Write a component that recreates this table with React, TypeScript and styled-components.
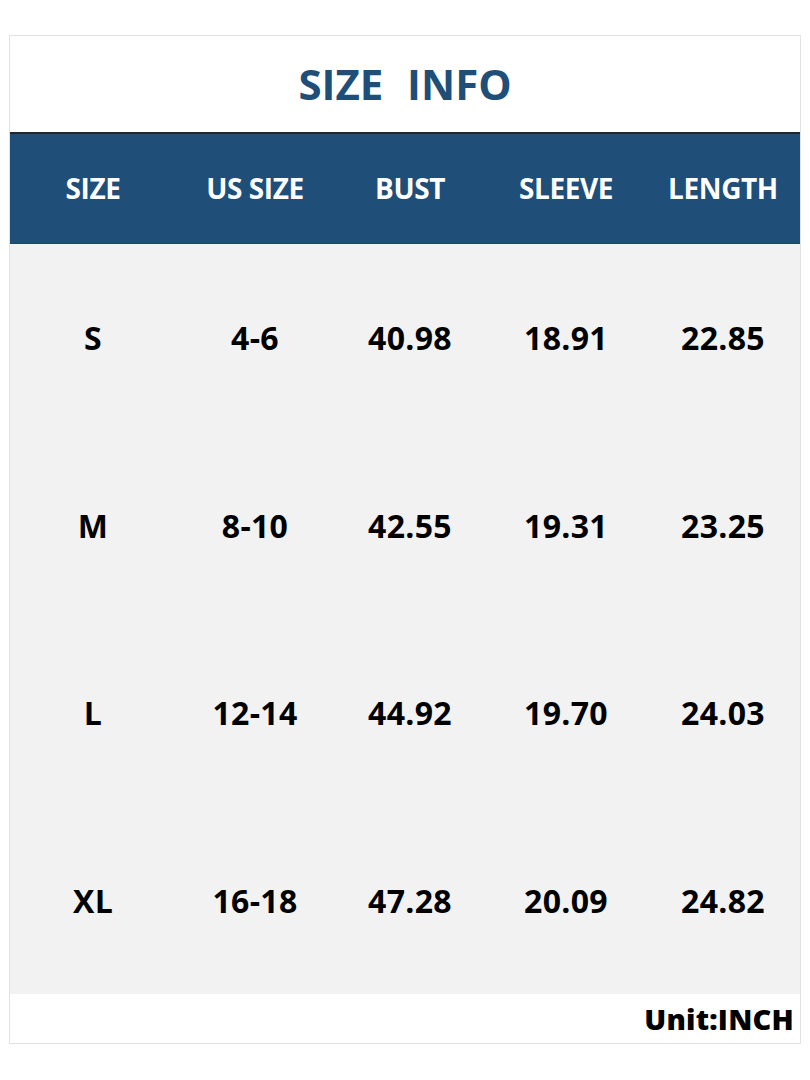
import React from "react";
import styled, { createGlobalStyle } from "styled-components";

const Global = createGlobalStyle`
  html, body { margin: 0; padding: 0; background: #ffffff; }
  body { font-family: "Open Sans", "Noto Sans", sans-serif; }
`;

const Page = styled.div`
  width: 810px;
  height: 1080px;
  padding-top: 35px;
  padding-left: 9px;
  box-sizing: border-box;
`;

const Sheet = styled.div`
  width: 792px;
  border: 1px solid #e2e2e2;
  box-sizing: border-box;
  display: flex;
  flex-direction: column;
`;

const TitleBar = styled.div`
  height: 96px;
  background: #ffffff;
  display: flex;
  align-items: center;
  justify-content: center;
  border-bottom: 2px solid #1c2733;
`;

const Title = styled.h1`
  margin: 0;
  font-size: 42px;
  font-weight: 700;
  color: #1f4e79;
  white-space: pre;
  word-spacing: 1px;
  line-height: 1;
`;

const cols = "166px 158px 152px 160px 154px";

const HeaderRow = styled.div`
  height: 110px;
  background: #1f4e79;
  display: grid;
  grid-template-columns: ${cols};
  align-items: center;
  border-bottom: 1px solid #1b4670;
  box-sizing: border-box;
`;

const HeadCell = styled.div`
  text-align: center;
  color: #ffffff;
  font-size: 28px;
  font-weight: 700;
  letter-spacing: -0.4px;
  white-space: nowrap;
  transform: translateY(-1px);
`;

const Body = styled.div`
  background: #f2f2f2;
  display: flex;
  flex-direction: column;
`;

const Row = styled.div`
  height: 187.5px;
  display: grid;
  grid-template-columns: ${cols};
  align-items: center;
`;

const Cell = styled.div`
  text-align: center;
  color: #000000;
  font-size: 32px;
  font-weight: 700;
  letter-spacing: 0.3px;
  white-space: nowrap;
`;

const Footer = styled.div`
  height: 49px;
  background: #ffffff;
  display: flex;
  align-items: center;
  justify-content: flex-end;
  padding-right: 6px;
`;

const Unit = styled.span`
  font-size: 29px;
  font-weight: 800;
  color: #000000;
  letter-spacing: 0.2px;
`;

const headers = ["SIZE", "US SIZE", "BUST", "SLEEVE", "LENGTH"];
const rows = [
  ["S", "4-6", "40.98", "18.91", "22.85"],
  ["M", "8-10", "42.55", "19.31", "23.25"],
  ["L", "12-14", "44.92", "19.70", "24.03"],
  ["XL", "16-18", "47.28", "20.09", "24.82"],
];

export default function App() {
  return (
    <>
      <Global />
      <Page>
        <Sheet>
          <TitleBar>
            <Title>{"SIZE  INFO"}</Title>
          </TitleBar>
          <HeaderRow>
            {headers.map((h) => (
              <HeadCell key={h}>{h}</HeadCell>
            ))}
          </HeaderRow>
          <Body>
            {rows.map((r) => (
              <Row key={r[0]}>
                {r.map((c, i) => (
                  <Cell key={i}>{c}</Cell>
                ))}
              </Row>
            ))}
          </Body>
          <Footer>
            <Unit>Unit:INCH</Unit>
          </Footer>
        </Sheet>
      </Page>
    </>
  );
}
